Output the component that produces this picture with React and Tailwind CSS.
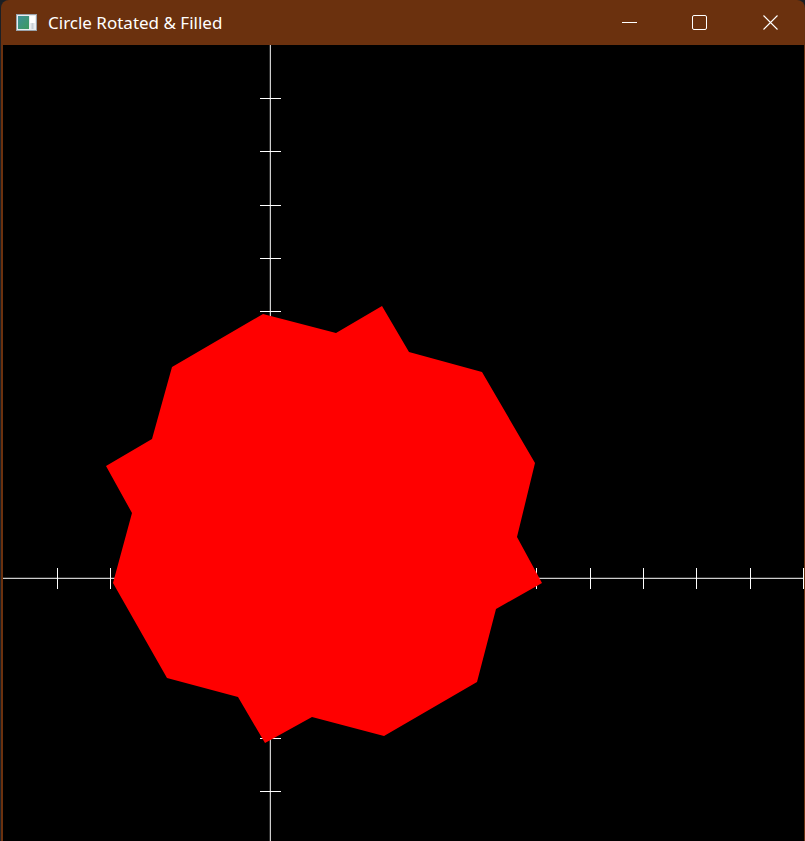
import React from 'react';

const ORIGIN_X = 270.3;
const ORIGIN_Y = 578.3;
const STEP = 53.3;

// polygon traced in page coordinates
const POINTS = [
  [263, 314], [336, 333], [382, 306], [409, 352], [482, 372], [535, 463],
  [517, 537], [542, 583], [496, 609], [477, 682], [384, 736], [312, 717],
  [265, 743], [238, 697], [167, 678], [113, 583], [132, 513], [106, 466],
  [152, 439], [172, 367],
];

const xTicks = [];
for (let k = -4; k <= 10; k++) {
  if (k !== 0) xTicks.push(Math.floor(ORIGIN_X + k * STEP) + 0.5);
}
const yTicks = [];
for (let k = -9; k <= 5; k++) {
  if (k !== 0) yTicks.push(Math.floor(ORIGIN_Y + k * STEP) + 0.5);
}

const AppIcon = () => (
  <svg width="21" height="17" viewBox="0 0 21 17">
    <defs>
      <linearGradient id="appgrad" x1="0" y1="0" x2="1" y2="1">
        <stop offset="0" stopColor="#3f8f9a" />
        <stop offset="1" stopColor="#3e9a5c" />
      </linearGradient>
    </defs>
    <rect x="0.5" y="0.5" width="20" height="16" fill="#e9ecef" stroke="#9aa3ab" />
    <rect x="2" y="2" width="11" height="13" fill="url(#appgrad)" />
    <rect x="14" y="2" width="5" height="7" fill="#ffffff" />
    <rect x="15.5" y="9" width="2" height="6" fill="#c9d0d6" />
  </svg>
);

const TitleBar = () => (
  <div className="h-[45px] flex items-center shrink-0">
    <div className="ml-[13px] flex items-center">
      <AppIcon />
    </div>
    <span
      className="ml-[11px] text-white text-[17px] leading-none"
      style={{ fontFamily: '"Segoe UI", "Noto Sans", "Open Sans", sans-serif' }}
    >
      Circle Rotated &amp; Filled
    </span>
    <div className="ml-auto flex h-full">
      <div className="w-[70px] h-full flex items-center justify-center">
        <div className="w-[15px] h-px bg-white" />
      </div>
      <div className="w-[70px] h-full flex items-center justify-center">
        <div className="w-[15px] h-[15px] border border-white rounded-[2px]" />
      </div>
      <div className="w-[70px] h-full flex items-center justify-center pl-[2px]">
        <svg width="15" height="15" viewBox="0 0 15 15">
          <path d="M0.5 0.5 L14.5 14.5 M14.5 0.5 L0.5 14.5" stroke="#ffffff" strokeWidth="1.1" />
        </svg>
      </div>
    </div>
  </div>
);

const Plot = () => (
  <svg width="801" height="796" viewBox="3 45 801 796" className="block">
    <rect x="3" y="45" width="801" height="796" fill="#000000" />
    <line x1="3" y1={ORIGIN_Y} x2="804" y2={ORIGIN_Y} stroke="#ffffff" strokeWidth="1" />
    <line x1={ORIGIN_X} y1="45" x2={ORIGIN_X} y2="841" stroke="#ffffff" strokeWidth="1" />
    {xTicks.map((x) => (
      <line key={`x${x}`} x1={x} y1="568" x2={x} y2="589" stroke="#ffffff" strokeWidth="1" />
    ))}
    {yTicks.map((y) => (
      <line key={`y${y}`} x1="260" y1={y} x2="281" y2={y} stroke="#ffffff" strokeWidth="1" />
    ))}
    <polygon points={POINTS.map((p) => p.join(',')).join(' ')} fill="#ff0000" />
  </svg>
);

const App = () => {
  return (
    <div className="w-[805px] h-[841px] bg-[#1c1f24] overflow-hidden pl-px">
      <div className="h-full flex flex-col bg-[#6b310e] rounded-t-[8px] overflow-hidden pl-[2px] pr-px">
        <TitleBar />
        <div className="flex-1 bg-black overflow-hidden">
          <Plot />
        </div>
      </div>
    </div>
  );
};

export default App;
